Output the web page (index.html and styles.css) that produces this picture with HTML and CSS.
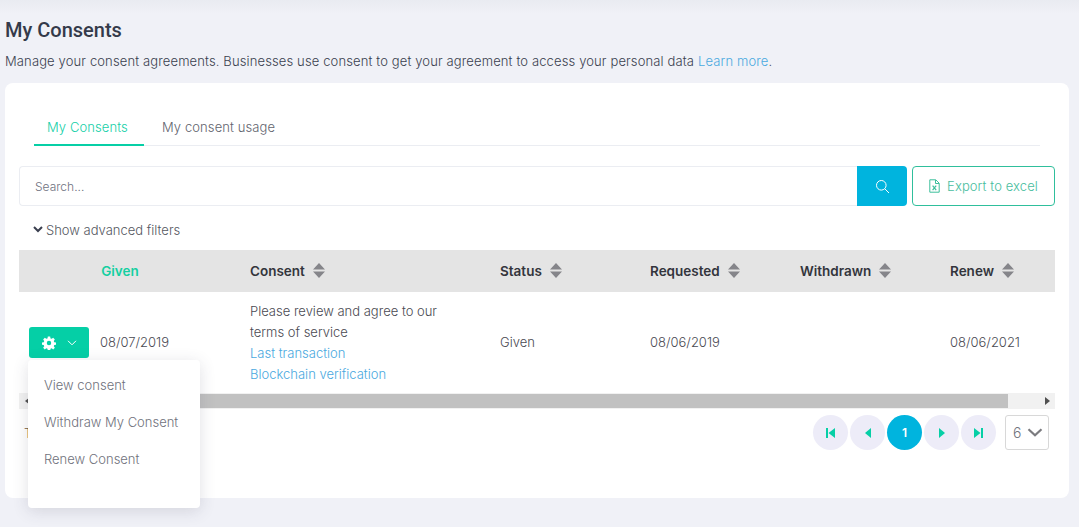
FILE: index.html
```html
<!DOCTYPE html>
<html lang="en">
<head>
<meta charset="utf-8">
<title>My Consents</title>
<link rel="stylesheet" href="styles.css">
</head>
<body>
<header class="page-head">
  <h1 class="title">My Consents</h1>
  <p class="intro">Manage your consent agreements. Businesses use consent to get your agreement to access your personal data <a class="link" href="#">Learn more</a>.</p>
</header>
<main class="card">
  <nav class="tabs">
    <a class="tab tab-active" href="#">My Consents</a>
    <a class="tab" href="#">My consent usage</a>
  </nav>
  <div class="toolbar">
    <div class="search">
      <input class="search-input" type="text" placeholder="Search...">
      <button class="search-btn" aria-label="Search">
        <svg width="15" height="15" viewBox="0 0 15 15" fill="none" stroke="#fff" stroke-width="1"><circle cx="6.3" cy="6.3" r="4.8"/><path d="M9.8 9.8 14 14"/></svg>
      </button>
    </div>
    <button class="export">
      <svg width="11" height="14" viewBox="0 0 11 14" fill="none" stroke="#3dbf9c" stroke-width="1"><path d="M.8.8h6l3.4 3.4v9H.8z"/><path d="M6.5 1v3.5h3.5"/><path d="M3.6 6.6l3.6 4.6M7.2 6.6l-3.6 4.6" stroke-width="1.2"/></svg>
      Export to excel
    </button>
  </div>
  <div class="filters">
    <svg class="filters-icon" width="10" height="7" viewBox="0 0 10 7" fill="none" stroke="#3a3f4f" stroke-width="2"><path d="M1 1l4 4 4-4"/></svg>
    Show advanced filters
  </div>
  <div class="table">
    <div class="row head">
      <div class="cell cell-given">Given</div>
      <div class="cell">Consent <svg class="sort" width="12" height="15" viewBox="0 0 12 15"><path d="M6 0l6 6.500H0zM0 8.500h12L6 15z"/></svg></div>
      <div class="cell">Status <svg class="sort" width="12" height="15" viewBox="0 0 12 15"><path d="M6 0l6 6.500H0zM0 8.500h12L6 15z"/></svg></div>
      <div class="cell">Requested <svg class="sort" width="12" height="15" viewBox="0 0 12 15"><path d="M6 0l6 6.500H0zM0 8.500h12L6 15z"/></svg></div>
      <div class="cell">Withdrawn <svg class="sort" width="12" height="15" viewBox="0 0 12 15"><path d="M6 0l6 6.500H0zM0 8.500h12L6 15z"/></svg></div>
      <div class="cell">Renew <svg class="sort" width="12" height="15" viewBox="0 0 12 15"><path d="M6 0l6 6.500H0zM0 8.500h12L6 15z"/></svg></div>
    </div>
    <div class="row body-row">
      <div class="cell cell-action">
        <button class="action-btn" aria-label="Actions">
          <svg width="14" height="14" viewBox="0 0 24 24" fill="#fff"><path fill-rule="evenodd" d="M10 1h4l.6 3.100 2 .8 2.600-1.800 2.800 2.800-1.800 2.600.8 2 3 .5v4l-3 .6-.8 2 1.800 2.600-2.800 2.800-2.600-1.800-2 .8-.6 3.200h-4l-.6-3.200-2-.8-2.600 1.800-2.800-2.800 1.800-2.600-.8-2-3-.6v-4l3-.5.8-2-1.800-2.600 2.800-2.800 2.600 1.800 2-.8zM12 8.200a3.800 3.800 0 1 0 0 7.600 3.800 3.800 0 0 0 0-7.600z"/></svg>
          <svg width="10" height="6" viewBox="0 0 10 6" fill="none" stroke="#fff" stroke-width="1"><path d="M1 .8l4 4 4-4"/></svg>
        </button>
        <span>08/07/2019</span>
      </div>
      <div class="cell cell-stack">
        <span>Please review and agree to our<br>terms of service</span>
        <a class="link" href="#">Last transaction</a>
        <a class="link" href="#">Blockchain verification</a>
      </div>
      <div class="cell">Given</div>
      <div class="cell">08/06/2019</div>
      <div class="cell"></div>
      <div class="cell">08/06/2021</div>
    </div>
    <div class="scrollbar">
      <svg class="arrow" width="5" height="8" viewBox="0 0 5 8"><path d="M5 0v8L0 4z"/></svg>
      <div class="scroll-track"><div class="scroll-thumb"></div></div>
      <svg class="arrow" width="5" height="8" viewBox="0 0 5 8"><path d="M0 0v8l5-4z"/></svg>
    </div>
  </div>
  <div class="pager-row">
    <span class="total">Total</span>
    <div class="pager">
      <button class="page" aria-label="First"><svg width="9" height="10" viewBox="0 0 9 10" fill="#06cfa6"><path d="M0 0h2v10H0zM9 0v10L2.500 5z"/></svg></button>
      <button class="page" aria-label="Previous"><svg width="6" height="10" viewBox="0 0 6 10" fill="#06cfa6"><path d="M6 0v10L0 5z"/></svg></button>
      <button class="page page-on">1</button>
      <button class="page" aria-label="Next"><svg width="6" height="10" viewBox="0 0 6 10" fill="#06cfa6"><path d="M0 0v10l6-5z"/></svg></button>
      <button class="page" aria-label="Last"><svg width="9" height="10" viewBox="0 0 9 10" fill="#06cfa6"><path d="M0 0v10l6.500-5zM7 0h2v10H7z"/></svg></button>
      <div class="size">6
        <svg width="16" height="9" viewBox="0 0 16 9" fill="none" stroke="#7b7b7f" stroke-width="2.200"><path d="M1.500 1.200 8 7.200l6.500-6"/></svg>
      </div>
    </div>
  </div>
  <div class="menu">
    <a class="menu-item" href="#">View consent</a>
    <a class="menu-item" href="#">Withdraw My Consent</a>
    <a class="menu-item" href="#">Renew Consent</a>
  </div>
</main>
</body>
</html>
```
FILE: styles.css
```css
* { box-sizing: border-box; }
html, body { height: 100%; }
body {
  margin: 0;
  height: 527px;
  overflow: hidden;
  padding: 0 10px 0 5px;
  background: linear-gradient(#e9ebf1 0, #f0f1f7 14px);
  color: #3a3f4f;
  font-family: Inter, "Noto Sans", sans-serif;
  font-size: 13px;
}
.page-head { height: 83px; padding-top: 18px; }
.title {
  margin: 0;
  font: 500 20px/24px Roboto, sans-serif;
  color: #343a4a;
}
.intro {
  margin: 9px 0 0;
  font-size: 13px;
  line-height: 20px;
  font-weight: 300;
  letter-spacing: .13px;
  color: #3a3f4f;
}
.link { color: #4aa9e0; text-decoration: none; font-weight: 300; }
.card {
  position: relative;
  height: 415px;
  background: #fff;
  border-radius: 8px;
  padding: 27px 14px 0;
}
.tabs {
  display: flex;
  height: 36px;
  margin: 0 15px;
  border-bottom: 1px solid #ebedf2;
}
.tab {
  height: 36px;
  padding: 0 13px;
  line-height: 35px;
  color: #62646e;
  font-size: 13px;
  letter-spacing: .1px;
  text-decoration: none;
  font-weight: 300;
}
.tab + .tab { margin-left: 5px; }
.tab-active {
  width: 110px;
  color: #15cfa8;
  border-bottom: 2px solid #06cfa6;
}
.toolbar { display: flex; gap: 5px; margin-top: 20px; height: 40px; }
.search { display: flex; width: 888px; }
.search-input {
  flex: 1;
  min-width: 0;
  height: 40px;
  padding: 0 15px;
  border: 1px solid #ebedf2;
  border-right: 0;
  border-radius: 4px 0 0 4px;
  outline: 0;
  font: 300 12px Inter, sans-serif;
  color: #3a3f4f;
}
.search-input::placeholder { color: #6f7280; opacity: 1; }
.search-btn {
  width: 50px;
  height: 40px;
  padding: 0;
  border: 0;
  border-radius: 0 4px 4px 0;
  background: #00b4de;
  display: flex;
  align-items: center;
  justify-content: center;
}
.export {
  width: 143px;
  height: 40px;
  padding: 0;
  border: 1px solid #2fbf9c;
  border-radius: 4px;
  background: #fff;
  color: #48bd9e;
  font: 300 13px Inter, sans-serif;
  letter-spacing: .1px;
  display: flex;
  align-items: center;
  justify-content: center;
  gap: 7px;
}
.filters {
  display: flex;
  align-items: center;
  height: 20px;
  margin: 14px 0 0 14px;
  gap: 3px;
  font-size: 13px;
  font-weight: 300;
  color: #55585f;
}
.filters-icon { margin-bottom: 2px; }
.table { margin-top: 10px; width: 1036px; }
.row {
  display: grid;
  grid-template-columns: 221px 250px 150px 150px 150px 115px;
}
.cell {
  display: flex;
  align-items: center;
  padding-left: 10px;
  white-space: nowrap;
}
.head {
  height: 42px;
  background: #e4e4e4;
  font-weight: 600;
  font-size: 13.500px;
  color: #33353c;
}
.sort { margin-left: 8px; margin-bottom: 2px; fill: #85858a; }
.cell-given { justify-content: center; padding: 0 19px 0 0; color: #15cfa1; }
.body-row {
  height: 101px;
  color: #4a4a52;
  font-size: 13px;
  font-weight: 300;
  line-height: 21px;
}
.cell-action { padding-left: 10px; gap: 11px; }
.action-btn {
  width: 60px;
  height: 31px;
  padding: 0 0 0 1px;
  border: 0;
  border-radius: 3px;
  background: #05cfa6;
  display: flex;
  align-items: center;
  justify-content: center;
  gap: 11px;
}
.cell-stack {
  flex-direction: column;
  align-items: flex-start;
  justify-content: center;
}
.scrollbar {
  display: flex;
  align-items: center;
  height: 16px;
  padding: 0 5px 0 6px;
  gap: 5px;
  background: #f1f1f1;
}
.arrow { flex: none; fill: #505050; }
.scroll-track { flex: 1; height: 14px; }
.scroll-thumb { width: 973px; height: 14px; background: #c1c1c1; }
.pager-row {
  display: flex;
  justify-content: space-between;
  margin-top: 6px;
  padding: 0 6px 0 5px;
}
.total { line-height: 36px; font-weight: 300; color: #6b5a40; }
.pager { display: flex; gap: 2px; }
.page {
  width: 35px;
  height: 35px;
  padding: 0;
  border: 0;
  border-radius: 50%;
  background: #edecf8;
  display: flex;
  align-items: center;
  justify-content: center;
  color: #fff;
  font: 600 12px Inter, sans-serif;
}
.page-on { background: #00b4de; }
.size {
  width: 44px;
  height: 35px;
  margin-left: 7px;
  padding-left: 7px;
  border: 1px solid #d8d8d8;
  border-radius: 3px;
  display: flex;
  align-items: center;
  gap: 6px;
  color: #72757f;
  font-size: 14px;
  font-weight: 300;
}
.menu {
  position: absolute;
  left: 23px;
  top: 277px;
  width: 172px;
  height: 148px;
  padding: 7px 0 0 16px;
  display: flex;
  flex-direction: column;
  background: #fff;
  border-radius: 4px;
  box-shadow: 0 3px 16px rgba(60, 65, 90, .16);
}
.menu-item {
  height: 37px;
  line-height: 37px;
  color: #70727c;
  font-size: 13px;
  font-weight: 300;
  text-decoration: none;
  white-space: nowrap;
}
```
